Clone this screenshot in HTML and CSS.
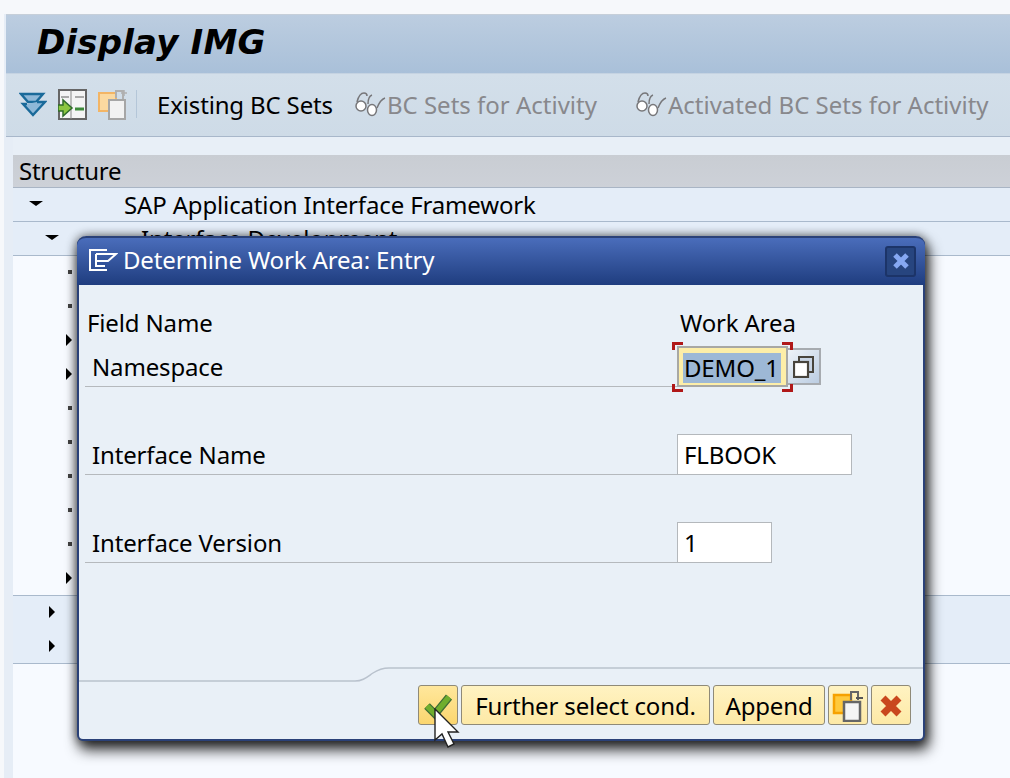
FILE: index.html
```html
<!DOCTYPE html>
<html>
<head>
	<meta charset="utf-8">
	<title>Display IMG</title>
	<link rel="stylesheet" href="styles.css">
</head>
<body>
	<div id="window">
		<div id="title-bar"><h1>Display IMG</h1></div>

		<div id="toolbar">
			<svg class="tool-icon" width="28" height="28" viewBox="0 0 28 28">
				<path d="M9 12L2 4h22l-7 8z" fill="#8fb8d8" stroke="#1a6a9a" stroke-width="2.4"/>
				<path d="M18 12h8l-12 13L4 14h4" fill="#8fb8d8" stroke="#1a6a9a" stroke-width="2.4"/>
			</svg>
			<svg class="tool-icon" width="29" height="31" viewBox="0 0 29 31">
				<rect x="1" y="1" width="27" height="29" fill="#f4f4f4" stroke="#666" stroke-width="2"/>
				<path d="M13 1v29" stroke="#888"/>
				<path d="M3 8h8M17 8h9" stroke="#aaa" stroke-width="2"/>
				<path d="M17 20h9" stroke="#3d8a3a" stroke-width="3"/>
				<path d="M0 16h5v-5l9 8-9 8v-5H0z" fill="#8cc63f" stroke="#2f6b2a" stroke-width="1.5"/>
			</svg>
			<svg class="tool-icon" width="30" height="32" viewBox="0 0 30 32">
				<rect x="1" y="5" width="17" height="18" fill="#fbd9a0" stroke="#f3b565" stroke-width="2"/>
				<rect x="11" y="12" width="16" height="19" fill="#f2f2f2" stroke="#a6a6a6" stroke-width="2"/>
				<path d="M18 10V3h7v8" fill="none" stroke="#b0b0b0" stroke-width="2"/>
				<path d="M23 5h6M26 2v6" stroke="#b0b0b0" stroke-width="1.5"/>
			</svg>
			<span class="tool-sep"></span>
			<span class="tool-btn">Existing BC Sets</span>
			<span class="tool-btn off first-off">
				<svg width="33" height="26" viewBox="0 0 33 26"><use href="#glasses"/></svg>BC Sets for Activity
			</span>
			<span class="tool-btn off last-off">
				<svg width="33" height="26" viewBox="0 0 33 26"><use href="#glasses"/></svg>Activated BC Sets for Activity
			</span>
		</div>

		<div id="content">
			<div id="tree-head">Structure</div>
			<ul id="tree">
				<li class="row band line"><i class="open lvl1"></i><span class="t1">SAP Application Interface Framework</span></li>
				<li class="row band line"><i class="open lvl2"></i><span class="t2">Interface Development</span></li>
				<li class="row"><i class="dot lvl3"></i></li>
				<li class="row"><i class="dot lvl3"></i></li>
				<li class="row"><i class="shut lvl3"></i></li>
				<li class="row"><i class="shut lvl3"></i></li>
				<li class="row"><i class="dot lvl3"></i></li>
				<li class="row"><i class="dot lvl3"></i></li>
				<li class="row"><i class="dot lvl3"></i></li>
				<li class="row"><i class="dot lvl3"></i></li>
				<li class="row"><i class="dot lvl3"></i></li>
				<li class="row line"><i class="shut lvl3"></i></li>
				<li class="row band"><i class="shut lvl2"></i></li>
				<li class="row band line"><i class="shut lvl2"></i></li>
			</ul>
		</div>
	</div>

	<div id="dialog">
		<div id="dialog-title">
			<svg width="30" height="24" viewBox="0 0 30 24">
				<path d="M19 2H2v20h17M8 6v12h9M8 6h20l-8 7H9" fill="none" stroke="#fff" stroke-width="2"/>
			</svg>
			<span>Determine Work Area: Entry</span>
			<span id="dialog-close">
				<svg width="18" height="18" viewBox="0 0 18 18"><path d="M3 3l12 12M15 3L3 15" stroke="#86a8f2" stroke-width="5"/></svg>
			</span>
		</div>

		<div id="dialog-body">
			<div class="heads"><span>Field Name</span><span>Work Area</span></div>
			<div class="field">
				<label>Namespace</label>
				<div class="input focus"><span class="marked">DEMO_1</span></div>
				<span class="help">
					<svg width="21" height="22" viewBox="0 0 21 22">
						<rect x="6" y="1" width="14" height="15" fill="#c8d4e4" stroke="#48443c" stroke-width="2"/>
						<rect x="1" y="6" width="14" height="15" fill="#fff" stroke="#48443c" stroke-width="2.2"/>
					</svg>
				</span>
			</div>
			<div class="field">
				<label>Interface Name</label>
				<div class="input wide">FLBOOK</div>
			</div>
			<div class="field">
				<label>Interface Version</label>
				<div class="input short">1</div>
			</div>
		</div>

		<svg id="dialog-rule" height="16" viewBox="0 0 844 16" preserveAspectRatio="none">
			<path d="M0 14H276c8 0 12-4 18-8s10-5 16-5H844" fill="none" stroke="#b9c2cd" stroke-width="1.5"/>
		</svg>

		<div id="dialog-foot">
			<span class="btn icon active">
				<svg width="28" height="28" viewBox="0 0 28 28">
					<path d="M3 14l8 8L25 5" fill="none" stroke="#3f6d36" stroke-width="8"/>
					<path d="M3 14l8 8L25 5" fill="none" stroke="#6fae2e" stroke-width="5.5"/>
				</svg>
			</span>
			<span class="btn further">Further select cond.</span>
			<span class="btn append">Append</span>
			<span class="btn icon">
				<svg width="32" height="32" viewBox="0 0 32 32">
					<rect x="2" y="5" width="17" height="18" fill="#ffc93c" stroke="#f6a100" stroke-width="2.5"/>
					<rect x="12" y="12" width="16" height="19" fill="#f5f5f5" stroke="#666" stroke-width="2.5"/>
					<path d="M19 10V2h7v8" fill="none" stroke="#666" stroke-width="2"/>
					<path d="M24 8h7" stroke="#555" stroke-width="2"/>
				</svg>
			</span>
			<span class="btn icon">
				<svg width="24" height="24" viewBox="0 0 24 24"><path d="M4 4l16 16M20 4L4 20" stroke="#c9471e" stroke-width="7"/></svg>
			</span>
		</div>
	</div>

	<svg id="pointer" width="26" height="42" viewBox="0 0 26 42">
		<path d="M1 1v31l7-6 6 13 6-3-6-12h10z" fill="#fff" stroke="#222" stroke-width="1.4"/>
	</svg>

	<svg width="0" height="0" class="defs">
		<defs>
			<g id="glasses" fill="none" stroke="#77777a" stroke-width="1.5">
				<path d="M3 11c1-4 3-9 7-9 2 0 3 1 3 3M14 13c0-5 1-8 4-9M23 17c2-5 5-9 8-10"/>
				<ellipse cx="7" cy="15" rx="5" ry="5" fill="#fff"/>
				<ellipse cx="18" cy="19" rx="4.500" ry="5.500" fill="#fff"/>
			</g>
		</defs>
	</svg>
</body>
</html>
```

FILE: styles.css
```css
*{
	margin: 0;
	padding: 0;
	box-sizing: border-box;
}
li{
	list-style: none;
}
body{
	width: 1010px;
	height: 778px;
	overflow: hidden;
	position: relative;
	background: #f6f8fb;
	font-family: "Noto Sans", sans-serif;
	font-size: 24px;
	letter-spacing: -.15px;
	color: #000;
}
#window{
	margin: 14px 0 0 6px;
	height: 764px;
	background: #e6edf6;
	box-shadow: -2px 0 0 #e6edf6;
	display: flex;
	flex-direction: column;
}
#title-bar{
	height: 60px;
	background: linear-gradient(#bccde0, #a9c0d9);
	border-top: 1px solid #c6cfd9;
	border-bottom: 1px solid #c5d3e2;
	padding-left: 31px;
}
#title-bar h1{
	font-family: "DejaVu Sans", sans-serif;
	font-size: 34px;
	line-height: 55px;
	font-style: italic;
	font-weight: bold;
	letter-spacing: .2px;
}
#toolbar{
	height: 63px;
	flex: none;
	display: flex;
	align-items: center;
	padding: 0 0 2px 13px;
	background: linear-gradient(#d3dfea, #cedbe7);
	border-bottom: 1px solid #a8b7ca;
}
.tool-icon{
	margin-right: 11px;
	flex: none;
}
.tool-sep{
	width: 1px;
	height: 28px;
	background: #b4c6d8;
	margin: 0 20px 0 -3px;
}
.tool-btn{
	display: flex;
	align-items: center;
	white-space: nowrap;
}
.tool-btn.off{
	color: #88888c;
	letter-spacing: 0;
}
.first-off{
	margin-left: 21px;
}
.last-off{
	margin-left: 38px;
}
#content{
	flex: 1;
	margin-left: 7px;
	padding-top: 18px;
	background: linear-gradient(#e8eff7 18px, #f7faff 18px);
}
#tree-head{
	height: 33px;
	line-height: 32px;
	padding-left: 6px;
	letter-spacing: -.25px;
	background: linear-gradient(#c9cdd3, #cdd1d8);
	border-bottom: 1px solid #a9b5c5;
}
.row{
	height: 34px;
	position: relative;
	white-space: nowrap;
	line-height: 34px;
}
.band{
	background: #e4edf8;
}
.line{
	border-bottom: 1px solid #a9b9cc;
}
.row i{
	position: absolute;
	top: 15px;
}
.lvl1{ left: 16px; }
.lvl2{ left: 32px; }
.lvl3{ left: 49px; }
.open{
	border-style: solid;
	border-width: 5px 7px 0;
	border-color: #000 transparent transparent;
	margin-top: -2px;
}
.shut{
	border-style: solid;
	border-width: 6px 0 6px 6px;
	border-color: transparent transparent transparent #000;
	margin-top: -5px;
	margin-left: 4px;
}
.dot{
	width: 4px;
	height: 4px;
	background: #444;
	margin-top: -1px;
	margin-left: 6px;
}
.t1{ margin-left: 111px; }
.t2{ margin-left: 128px; }

/* popup */
#dialog{
	position: absolute;
	left: 77px;
	top: 236px;
	width: 848px;
	height: 505px;
	background: #e9f0f7;
	border: 2px solid #2a4178;
	border-top: none;
	border-radius: 9px 9px 6px 6px;
	box-shadow: 3px 8px 14px 1px rgba(0, 0, 0, .8), 0 0 10px 1px rgba(0, 0, 0, .45);
	display: flex;
	flex-direction: column;
}
#dialog-title{
	height: 49px;
	margin: 0 -2px;
	flex: none;
	display: flex;
	align-items: center;
	padding: 0 9px 4px 11px;
	gap: 5px;
	color: #fff;
	border-radius: 9px 9px 0 0;
	border-top: 2px solid #2a4178;
	background: linear-gradient(#4a6dbb, #1f3d7f);
}
#dialog-close{
	margin-left: auto;
	margin-top: 3px;
	width: 31px;
	height: 31px;
	display: flex;
	align-items: center;
	justify-content: center;
	background: #27457f;
	border: 2px solid #1c3468;
	border-radius: 3px;
}
#dialog-body{
	flex: 1;
	padding: 21px 0 0 6px;
}
.heads{
	display: grid;
	grid-template-columns: 593px auto;
	height: 40px;
	line-height: 33px;
	margin-left: 2px;
}
.field{
	display: flex;
	align-items: flex-end;
	height: 41px;
	margin-bottom: 47px;
	position: relative;
}
.field label{
	width: 592px;
	height: 41px;
	line-height: 41px;
	padding-left: 7px;
	border-bottom: 1px solid #b5b9bd;
}
.input{
	height: 41px;
	line-height: 39px;
	padding-left: 6px;
	background: #fff;
	border: 1px solid #b4b8bc;
	flex: none;
}
.input.focus{
	width: 111px;
	background: #fdeea8;
	border: 2px solid #a8a8a4;
	padding-left: 4px;
	position: relative;
}
.input.focus::before{
	content: "";
	position: absolute;
	left: -7px;
	top: -6px;
	right: -7px;
	bottom: -7px;
	background:
		linear-gradient(#b01818, #b01818) 0 0 / 11px 3px no-repeat,
		linear-gradient(#b01818, #b01818) 0 0 / 3px 8px no-repeat,
		linear-gradient(#b01818, #b01818) 100% 0 / 11px 3px no-repeat,
		linear-gradient(#b01818, #b01818) 100% 0 / 3px 8px no-repeat,
		linear-gradient(#b01818, #b01818) 0 100% / 11px 3px no-repeat,
		linear-gradient(#b01818, #b01818) 0 100% / 3px 8px no-repeat,
		linear-gradient(#b01818, #b01818) 100% 100% / 11px 3px no-repeat,
		linear-gradient(#b01818, #b01818) 100% 100% / 3px 8px no-repeat;
}
.marked{
	display: inline-block;
	width: 98px;
	padding-left: 1px;
	background: #9db8d6;
	height: 30px;
	line-height: 29px;
	position: relative;
}
.help{
	width: 33px;
	height: 37px;
	margin-bottom: 2px;
	display: flex;
	align-items: center;
	justify-content: center;
	background: linear-gradient(135deg, #eef3f8, #bccde2);
	border: 2px solid #a7abb0;
	border-left: none;
}
.input.wide{
	width: 175px;
}
.input.short{
	width: 95px;
}
#dialog-rule{
	display: block;
	width: 100%;
	flex: none;
	margin: 1px 0 2px;
}
#dialog-foot{
	display: flex;
	justify-content: flex-end;
	gap: 3px;
	padding: 0 12px 14px 0;
}
.btn{
	height: 40px;
	padding-top: 1px;
	display: flex;
	align-items: center;
	justify-content: center;
	background: linear-gradient(#fff3c2, #fde9a6);
	border: 1px solid #8f8a78;
	border-radius: 3px;
	white-space: nowrap;
}
.btn.icon{
	width: 40px;
}
.btn.active{
	background: linear-gradient(#ffe79c, #fbd66f);
}
.further{
	width: 249px;
}
.append{
	width: 112px;
}
#pointer{
	position: absolute;
	left: 434px;
	top: 708px;
}
.defs{
	position: absolute;
}
```
